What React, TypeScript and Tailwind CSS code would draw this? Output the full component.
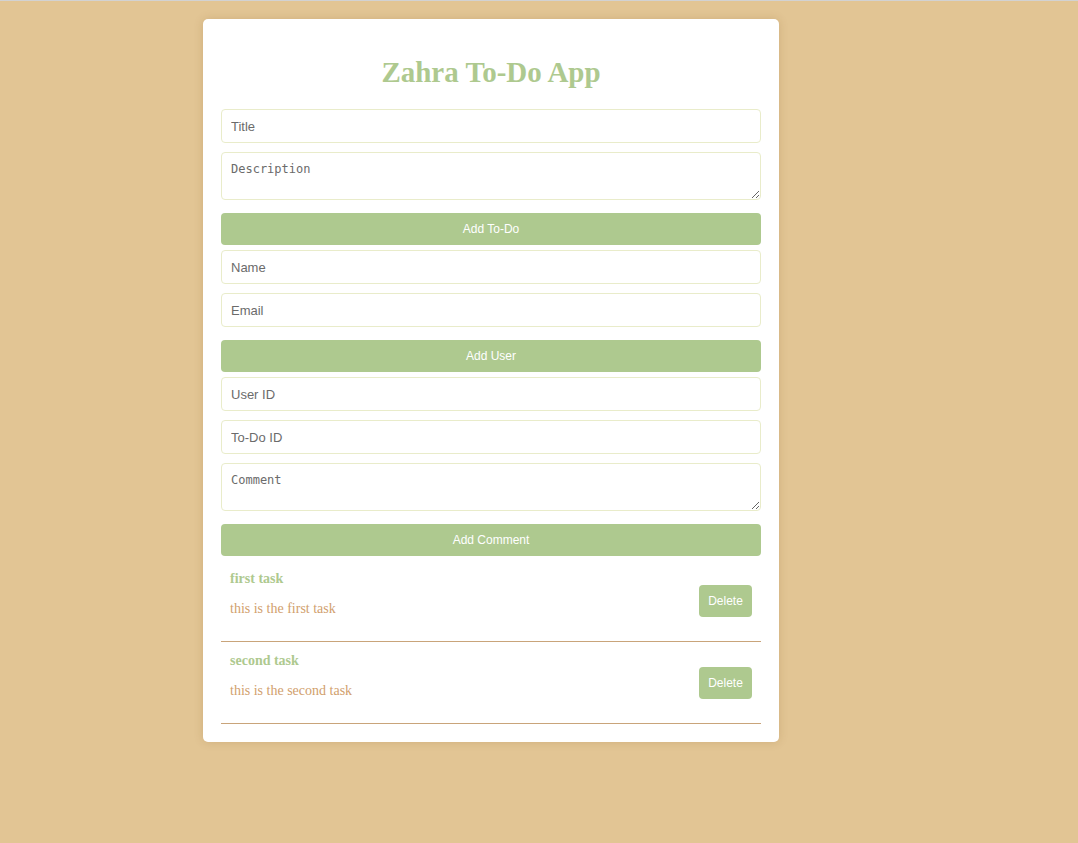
import React from 'react';

const inputCls =
  'block w-full h-[34px] px-[9px] rounded-[4px] border border-[#e9ecca] bg-white text-[13px] text-[#333] placeholder:text-[#6b6b6b] outline-none';
const areaCls =
  'block w-full h-[48px] px-[9px] py-[8px] rounded-[4px] border border-[#e9ecca] bg-white text-[12px] leading-[16px] text-[#333] placeholder:text-[#6b6b6b] outline-none';
const btnCls =
  'block w-full h-[32px] rounded-[4px] bg-[#aec98f] text-white text-[12px]';

const todos = [
  { title: 'first task', description: 'this is the first task' },
  { title: 'second task', description: 'this is the second task' },
];

export default function App() {
  return (
    <div
      className="min-h-[843px] bg-[#e2c594] border-t border-[#d2d2d2] pt-[18px] pl-[203px]"
      style={{ fontFamily: '"Liberation Sans", Arial, sans-serif' }}
    >
      <div className="w-[576px] bg-white rounded-[5px] shadow-[0_0_10px_rgba(120,80,20,0.18)] px-[18px] pt-[36px] pb-[18px]">
        <h1
          className="text-center text-[29px] leading-[34px] font-bold text-[#aec98f]"
          style={{ fontFamily: '"Liberation Serif", "Times New Roman", serif' }}
        >
          Zahra To-Do App
        </h1>

        {/* todo form */}
        <input className={`${inputCls} mt-[20px]`} placeholder="Title" />
        <textarea
          className={`${areaCls} mt-[9px]`}
          placeholder="Description"
          style={{ fontFamily: '"DejaVu Sans Mono", monospace' }}
        />
        <button className={`${btnCls} mt-[13px]`}>Add To-Do</button>

        {/* user form */}
        <input className={`${inputCls} mt-[5px]`} placeholder="Name" />
        <input className={`${inputCls} mt-[9px]`} placeholder="Email" />
        <button className={`${btnCls} mt-[13px]`}>Add User</button>

        {/* comment form */}
        <input className={`${inputCls} mt-[5px]`} placeholder="User ID" />
        <input className={`${inputCls} mt-[9px]`} placeholder="To-Do ID" />
        <textarea
          className={`${areaCls} mt-[9px]`}
          placeholder="Comment"
          style={{ fontFamily: '"DejaVu Sans Mono", monospace' }}
        />
        <button className={`${btnCls} mt-[13px]`}>Add Comment</button>

        <ul className="mt-[5px] flex flex-col gap-[1px]">
          {todos.map((todo, i) => (
            <li
              key={i}
              className="flex items-center justify-between px-[9px] py-[10px] border-b border-[#c9a47a]"
            >
              <div
                className="flex flex-col pb-[13px]"
                style={{ fontFamily: '"Liberation Serif", "Times New Roman", serif' }}
              >
                <h3 className="text-[14px] leading-[16px] font-bold text-[#aec98f]">{todo.title}</h3>
                <p className="mt-[13px] text-[14px] leading-[18px] text-[#d1a06d]">{todo.description}</p>
              </div>
              <button className="h-[32px] w-[53px] rounded-[4px] bg-[#aec98f] text-white text-[12px]">
                Delete
              </button>
            </li>
          ))}
        </ul>
      </div>
    </div>
  );
}
